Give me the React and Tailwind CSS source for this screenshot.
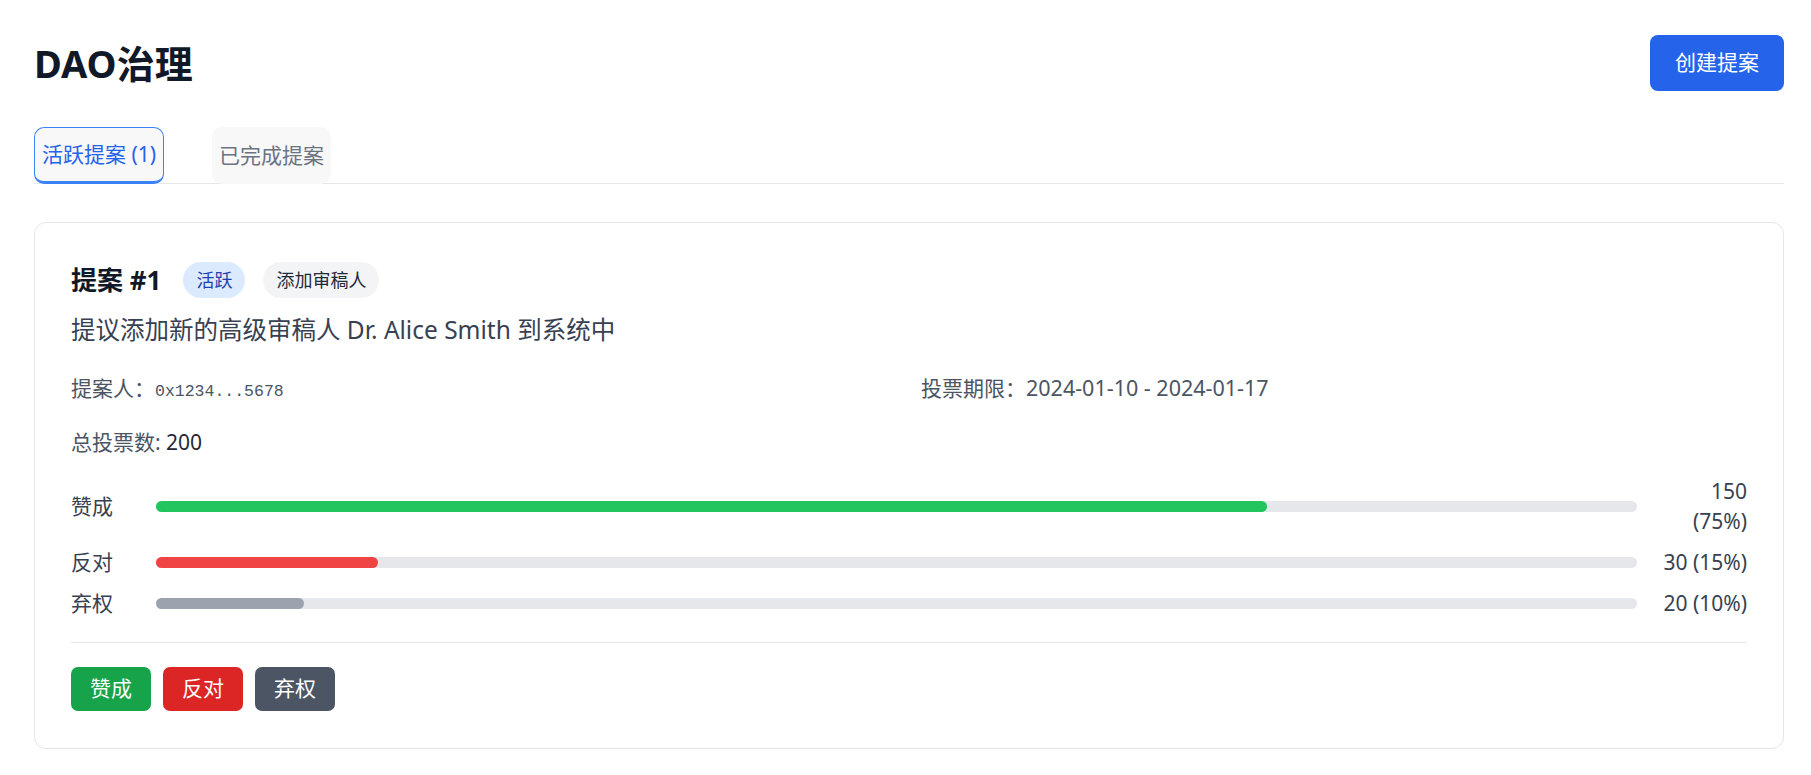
import React, { useState } from 'react';

const proposal = {
  id: 1,
  status: '活跃',
  type: '添加审稿人',
  description: '提议添加新的高级审稿人 Dr. Alice Smith 到系统中',
  proposer: '0x1234...5678',
  period: '2024-01-10 - 2024-01-17',
  total: 200,
  votes: [
    { label: '赞成', count: 150, pct: 75, bar: 'bg-[#22c55e]' },
    { label: '反对', count: 30, pct: 15, bar: 'bg-[#ef4444]' },
    { label: '弃权', count: 20, pct: 10, bar: 'bg-[#9ca3af]' },
  ],
};

const VoteRow = ({ vote }) => (
  <div className="flex items-center">
    <span className="w-[85px] shrink-0 text-[#374151]">{vote.label}</span>
    <div className="flex-1 h-[11px] rounded-full bg-[#e5e7eb]">
      <div className={`h-full rounded-full ${vote.bar}`} style={{ width: `${vote.pct}%` }} />
    </div>
    <span className="ml-[19px] w-[91px] shrink-0 text-right text-[#374151]">
      {vote.count} ({vote.pct}%)
    </span>
  </div>
);

const App = () => {
  const [tab, setTab] = useState('active');

  return (
    <div
      className="min-h-screen bg-white pl-[34px] pr-[27px] pt-[35px] pb-[28px]"
      style={{ fontFamily: '"Noto Sans", "Noto Sans CJK SC", sans-serif' }}
    >
      {/* header */}
      <div className="flex items-center justify-between h-[56px]">
        <h1 className="text-[38px] font-bold text-[#111827] leading-none">DAO治理</h1>
        <button className="h-[56px] px-[25px] rounded-[8px] bg-[#2563eb] text-white text-[21px]">
          创建提案
        </button>
      </div>

      {/* tabs */}
      <div className="mt-[36px] flex gap-[48px] border-b border-[#e5e7eb]">
        <button
          onClick={() => setTab('active')}
          className={`-mb-px h-[57px] px-[7px] rounded-[10px] bg-[#f8f8f8] text-[21px] ${
            tab === 'active'
              ? 'border border-b-[3px] border-[#3b82f6] text-[#2563eb]'
              : 'text-[#6b7280]'
          }`}
        >
          活跃提案 (1)
        </button>
        <button
          onClick={() => setTab('done')}
          className={`-mb-px h-[57px] px-[7px] rounded-[10px] bg-[#f8f8f8] text-[21px] ${
            tab === 'done'
              ? 'border border-b-[3px] border-[#3b82f6] text-[#2563eb]'
              : 'text-[#6b7280]'
          }`}
        >
          已完成提案
        </button>
      </div>

      {/* proposal card */}
      <div className="mt-[38px] rounded-[12px] border border-[#e5e7eb] bg-white px-[36px] pt-[39px] pb-[37px]">
        <div className="flex items-center h-[36px]">
          <h3 className="text-[26px] font-bold text-[#111827] mr-[22px]">提案 #{proposal.id}</h3>
          <span className="h-[36px] px-[13px] flex items-center rounded-full bg-[#dbeafe] text-[#1e40af] text-[18px]">
            {proposal.status}
          </span>
          <span className="ml-[18px] h-[36px] px-[13px] flex items-center rounded-full bg-[#f3f4f6] text-[#1f2937] text-[18px]">
            {proposal.type}
          </span>
        </div>

        <p className="mt-[15px] text-[24.5px] leading-[34px] text-[#374151]">{proposal.description}</p>

        <div className="mt-[26px] grid grid-cols-2 gap-x-[24px] text-[21px] leading-[30px] text-[#4b5563]">
          <div>
            提案人：
            <span className="text-[16.5px]" style={{ fontFamily: '"Liberation Mono", monospace' }}>
              {proposal.proposer}
            </span>
          </div>
          <div>投票期限：<span className="text-[21.5px]">{proposal.period}</span></div>
        </div>

        <div className="mt-[20px] text-[21px] leading-[30px] text-[#4b5563]">
          总投票数: <span className="text-[#1f2937]">{proposal.total}</span>
        </div>

        <div className="mt-[19px] flex flex-col gap-[11px] text-[21px] leading-[30px]">
          {proposal.votes.map((v) => (
            <VoteRow key={v.label} vote={v} />
          ))}
        </div>

        <div className="mt-[24px] pt-[24px] border-t border-[#e5e7eb] flex gap-[12px]">
          <button className="h-[44px] px-[19px] rounded-[7px] bg-[#16a34a] text-white text-[21px]">赞成</button>
          <button className="h-[44px] px-[19px] rounded-[7px] bg-[#dc2626] text-white text-[21px]">反对</button>
          <button className="h-[44px] px-[19px] rounded-[7px] bg-[#4b5563] text-white text-[21px]">弃权</button>
        </div>
      </div>
    </div>
  );
};

export default App;
